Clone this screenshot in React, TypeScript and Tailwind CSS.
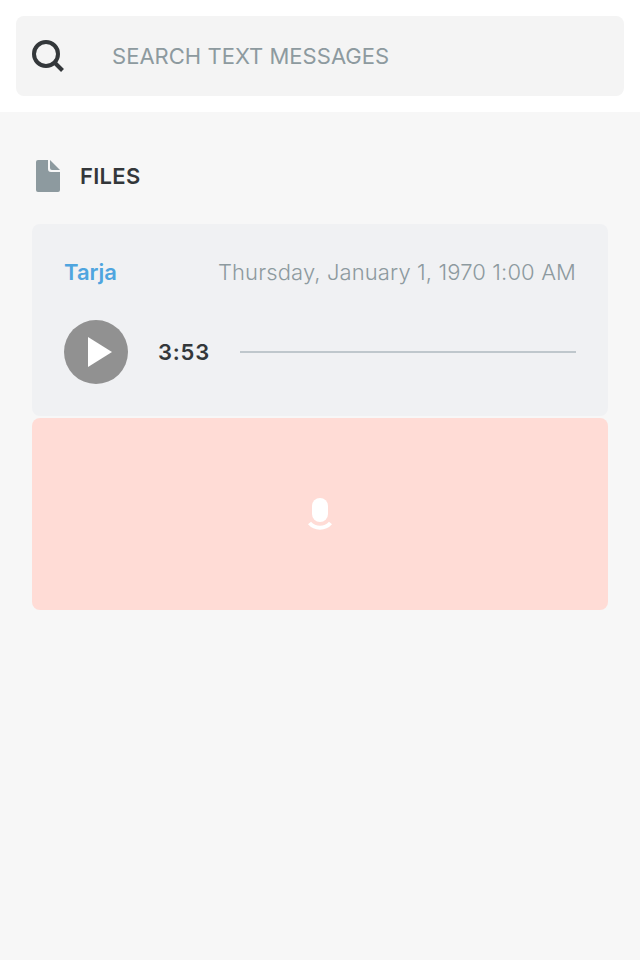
export default function App() {
  return (
    <main className="flex h-[960px] w-[640px] flex-col bg-[#f7f7f7] font-['Inter',sans-serif] text-[22px] leading-8 text-[#33373a]">
      <header className="h-28 bg-white p-4">
        <div className="flex h-20 items-center rounded-lg bg-[#f4f4f4] px-4">
          <svg className="size-8 shrink-0" viewBox="0 0 32 32" fill="none" stroke="#33373a" strokeWidth="4">
            <circle cx="14" cy="14" r="12" />
            <path d="M22.5 22.5 30.5 30.5" />
          </svg>
          <span className="ml-12 whitespace-nowrap tracking-[0.02px] text-[#8d9a9f]">SEARCH TEXT MESSAGES</span>
        </div>
      </header>
      <section className="px-8 pt-8">
        <div className="flex h-16 items-center">
          <svg className="size-8" viewBox="0 0 32 32" fill="#8d9a9f">
            <path d="M6 0H16V9Q16 12 19 12H28V30Q28 32 26 32H6Q4 32 4 30V2Q4 0 6 0Z" />
            <path d="M18 0 28 10H20Q18 10 18 8Z" />
          </svg>
          <h1 className="ml-4 font-semibold tracking-[0.3px]">FILES</h1>
        </div>
        <article className="mt-4 h-48 rounded-lg bg-[#f0f1f3] px-8 pt-8">
          <div className="flex justify-between">
            <span className="font-semibold text-[#4fa5df]">Tarja</span>
            <time className="font-light tracking-[0.12px] text-[#8d9a9f]">Thursday, January 1, 1970 1:00 AM</time>
          </div>
          <div className="mt-8 flex h-16 items-center">
            <button aria-label="Play" className="size-16 rounded-full bg-[#919191]">
              <svg viewBox="0 0 64 64" fill="white"><path d="M24 17 48 32 24 47Z" /></svg>
            </button>
            <span className="ml-[30px] w-[82px] font-semibold tracking-[0.8px]">3:53</span>
            <div className="h-0.5 flex-1 bg-[#bfc7cc]" />
          </div>
        </article>
        <div className="mt-0.5 flex h-48 items-center justify-center rounded-lg bg-[#ffdcd6]">
          <svg className="size-8" viewBox="0 0 32 32">
            <rect x="8" width="16" height="24" rx="8" fill="white" />
            <path d="M5.500 25A14 14 0 0 0 26.500 25" fill="none" stroke="white" strokeWidth="4" />
          </svg>
        </div>
      </section>
    </main>
  );
}
